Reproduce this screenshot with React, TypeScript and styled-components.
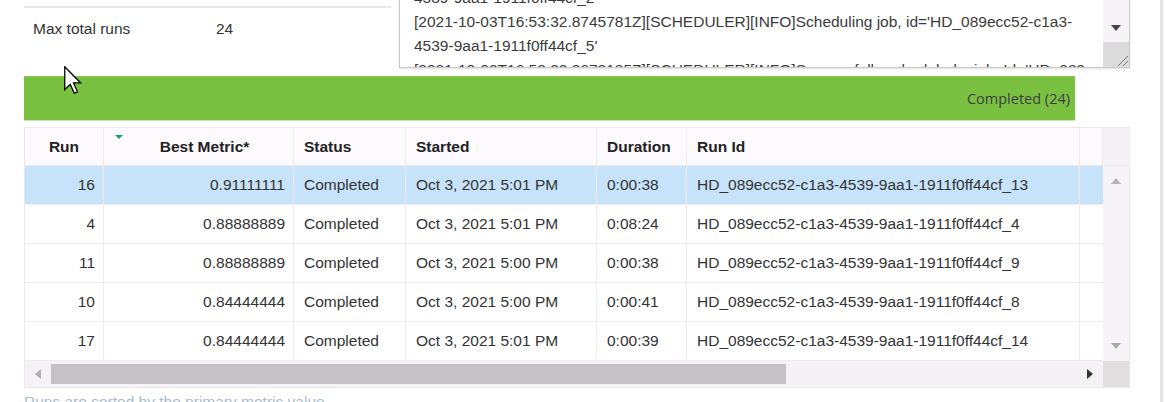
import React from "react";
import styled, { createGlobalStyle } from "styled-components";

const Global = createGlobalStyle`
  html, body { margin: 0; padding: 0; background: #fff; overflow: hidden; }
  body { font-family: "Liberation Sans", Arial, sans-serif; color: #333; }
`;

const Shell = styled.div`
  position: relative;
  display: flex;
  align-items: flex-start;
  width: 1165px;
  height: 402px;
  overflow: hidden;
  background: #fff;
`;

const Main = styled.div`
  width: 1160px;
  flex-shrink: 0;
  box-sizing: border-box;
  padding-left: 24px;
  margin-top: -40px;
  display: flex;
  flex-direction: column;
  & > * {
    flex-shrink: 0;
  }
`;

const Edge = styled.div`
  flex: 1;
  align-self: stretch;
  border-left: 3px solid #e3e3e3;
`;

const TopRow = styled.div`
  display: flex;
  gap: 8px;
  height: 108px;
`;

const Props = styled.div`
  width: 367px;
  display: flex;
  flex-direction: column;
`;

const PropRow = styled.div<{ $divider?: boolean }>`
  display: flex;
  align-items: center;
  flex-shrink: 0;
  height: ${(p) => (p.$divider ? "48px" : "42px")};
  box-sizing: border-box;
  padding-left: 9px;
  font-size: 15.5px;
  color: #333;
  border-bottom: ${(p) => (p.$divider ? "2px solid #e8e8e8" : "none")};
`;

const PropLabel = styled.span`
  width: 183px;
`;

const LogBox = styled.div`
  width: 731px;
  box-sizing: border-box;
  border: 1px solid #c9c9c9;
  box-shadow: 0 1px 2px rgba(0, 0, 0, 0.12);
  display: flex;
  background: #fff;
`;

const LogText = styled.div`
  flex: 1;
  overflow: hidden;
  padding: 1px 0 0 14px;
  font-size: 15.5px;
  line-height: 24px;
  color: #3b3b3b;
  white-space: nowrap;
`;

const LogScroll = styled.div`
  width: 26px;
  background: #f7f4f7;
  display: flex;
  flex-direction: column;
  justify-content: flex-end;
`;

const ArrowCell = styled.div<{ $h: number }>`
  height: ${(p) => p.$h}px;
  display: flex;
  align-items: center;
  justify-content: center;
`;

const Grip = styled.div`
  height: 25px;
  background: #dcdcdc;
  display: flex;
  align-items: flex-end;
  justify-content: flex-end;
`;

const Tri = styled.span<{ $dir: "up" | "down" | "left" | "right"; $c: string }>`
  width: 0;
  height: 0;
  border-style: solid;
  ${(p) =>
    p.$dir === "down"
      ? `border-width: 6px 5px 0 5px; border-color: ${p.$c} transparent transparent transparent;`
      : p.$dir === "up"
      ? `border-width: 0 5px 6px 5px; border-color: transparent transparent ${p.$c} transparent;`
      : p.$dir === "left"
      ? `border-width: 5px 6px 5px 0; border-color: transparent ${p.$c} transparent transparent;`
      : `border-width: 5px 0 5px 6px; border-color: transparent transparent transparent ${p.$c};`}
`;

const StatusBar = styled.div`
  margin-top: 8px;
  width: 1051px;
  height: 45px;
  box-sizing: border-box;
  background: #7ac142;
  border-top: 1px solid #86c755;
  border-bottom: 1px solid #c6e5a8;
  display: flex;
  align-items: center;
  justify-content: flex-end;
  padding-right: 5px;
  font-family: "Open Sans", "DejaVu Sans", sans-serif;
  font-size: 14.5px;
  color: #3e3e3e;
`;

const Frame = styled.div`
  margin-top: 6px;
  width: 1106px;
  box-sizing: border-box;
  border: 1px solid #ebe7eb;
  display: flex;
  flex-direction: column;
`;

const COLS = "79px 190px 112px 191px 90px 393px 23px";

const HeadRow = styled.div`
  display: grid;
  grid-template-columns: ${COLS} 26px;
  height: 38px;
  box-sizing: border-box;
  border-bottom: 1px solid #ebe7eb;
  background: #fdfafd;
`;

const HeadCell = styled.div<{ $center?: boolean; $scroll?: boolean; $sorted?: boolean }>`
  position: relative;
  display: flex;
  align-items: center;
  justify-content: ${(p) => (p.$center ? "center" : "flex-start")};
  padding: ${(p) => (p.$sorted ? "0 10px 0 22px" : "0 10px")};
  box-sizing: border-box;
  border-right: ${(p) => (p.$scroll ? "none" : "1px solid #efebef")};
  background: ${(p) => (p.$scroll ? "#f5f2f5" : "transparent")};
  font-weight: bold;
  font-size: 15.5px;
  color: #222;
`;

const SortMark = styled.span`
  position: absolute;
  left: 11px;
  top: 7px;
  width: 0;
  height: 0;
  border-style: solid;
  border-width: 4px 4px 0 4px;
  border-color: #1c9b6e transparent transparent transparent;
`;

const Body = styled.div`
  display: flex;
`;

const Rows = styled.div`
  width: 1078px;
  display: flex;
  flex-direction: column;
`;

const Row = styled.div<{ $sel?: boolean }>`
  display: grid;
  grid-template-columns: ${COLS};
  height: 39px;
  box-sizing: border-box;
  border-bottom: 1px solid #efebef;
  background: ${(p) => (p.$sel ? "#c6e3fa" : "#fff")};
`;

const Cell = styled.div<{ $right?: boolean; $last?: boolean }>`
  display: flex;
  align-items: center;
  justify-content: ${(p) => (p.$right ? "flex-end" : "flex-start")};
  padding: ${(p) => (p.$right ? "0 8px 0 0" : "0 0 0 10px")};
  box-sizing: border-box;
  border-right: ${(p) => (p.$last ? "none" : "1px solid #efebef")};
  font-size: 15.5px;
  color: #333;
  white-space: nowrap;
  overflow: hidden;
`;

const VScroll = styled.div`
  width: 26px;
  background: #f7f4f7;
  display: flex;
  flex-direction: column;
  justify-content: space-between;
  align-items: center;
  padding: 12px 0;
  box-sizing: border-box;
`;

const HScrollRow = styled.div`
  display: flex;
  height: 26px;
`;

const HTrack = styled.div`
  width: 1078px;
  background: #f5f2f5;
  display: flex;
  align-items: center;
`;

const HBtn = styled.div`
  width: 26px;
  height: 26px;
  display: flex;
  align-items: center;
  justify-content: center;
`;

const HThumb = styled.div`
  width: 735px;
  height: 20px;
  background: #c4c2c4;
`;

const HSpace = styled.div`
  flex: 1;
`;

const Corner = styled.div`
  width: 26px;
  background: #e0dede;
`;

const Footnote = styled.div`
  margin-top: 5px;
  font-size: 15.5px;
  line-height: 18px;
  color: #a9bccd;
  white-space: nowrap;
`;

const Cursor = styled.svg`
  position: absolute;
  left: 64px;
  top: 66px;
`;

type Run = {
  run: number;
  metric: string;
  started: string;
  duration: string;
  id: string;
};

const runs: Run[] = [
  { run: 16, metric: "0.91111111", started: "Oct 3, 2021 5:01 PM", duration: "0:00:38", id: "HD_089ecc52-c1a3-4539-9aa1-1911f0ff44cf_13" },
  { run: 4, metric: "0.88888889", started: "Oct 3, 2021 5:01 PM", duration: "0:08:24", id: "HD_089ecc52-c1a3-4539-9aa1-1911f0ff44cf_4" },
  { run: 11, metric: "0.88888889", started: "Oct 3, 2021 5:00 PM", duration: "0:00:38", id: "HD_089ecc52-c1a3-4539-9aa1-1911f0ff44cf_9" },
  { run: 10, metric: "0.84444444", started: "Oct 3, 2021 5:00 PM", duration: "0:00:41", id: "HD_089ecc52-c1a3-4539-9aa1-1911f0ff44cf_8" },
  { run: 17, metric: "0.84444444", started: "Oct 3, 2021 5:01 PM", duration: "0:00:39", id: "HD_089ecc52-c1a3-4539-9aa1-1911f0ff44cf_14" },
];

const logLines = [
  "[2021-10-03T16:53:32.5104522Z][SCHEDULER][INFO]Successfully scheduled a job. Id='HD_089ecc52-c1a3-",
  "4539-9aa1-1911f0ff44cf_2",
  "[2021-10-03T16:53:32.8745781Z][SCHEDULER][INFO]Scheduling job, id='HD_089ecc52-c1a3-",
  "4539-9aa1-1911f0ff44cf_5'",
  "[2021-10-03T16:53:33.2672185Z][SCHEDULER][INFO]Successfully scheduled a job. Id='HD_089ecc52-c1a3-",
];

export default function App() {
  return (
    <>
      <Global />
      <Shell>
        <Main>
          <TopRow>
            <Props>
              <PropRow $divider>
                <PropLabel>Max concurrent runs</PropLabel>
                <span>4</span>
              </PropRow>
              <PropRow>
                <PropLabel>Max total runs</PropLabel>
                <span>24</span>
              </PropRow>
            </Props>
            <LogBox>
              <LogText>
                {logLines.map((l, i) => (
                  <div key={i}>{l}</div>
                ))}
              </LogText>
              <LogScroll>
                <ArrowCell $h={28}>
                  <Tri $dir="down" $c="#444" />
                </ArrowCell>
                <Grip>
                  <svg width="14" height="14" viewBox="0 0 14 14">
                    <line x1="3" y1="13" x2="13" y2="3" stroke="#777" strokeWidth="1" />
                    <line x1="8" y1="13" x2="13" y2="8" stroke="#777" strokeWidth="1" />
                  </svg>
                </Grip>
              </LogScroll>
            </LogBox>
          </TopRow>

          <StatusBar>Completed (24)</StatusBar>

          <Frame>
            <HeadRow>
              <HeadCell $center>Run</HeadCell>
              <HeadCell $center $sorted>
                <SortMark />
                Best Metric*
              </HeadCell>
              <HeadCell>Status</HeadCell>
              <HeadCell>Started</HeadCell>
              <HeadCell>Duration</HeadCell>
              <HeadCell>Run Id</HeadCell>
              <HeadCell />
              <HeadCell $scroll />
            </HeadRow>
            <Body>
              <Rows>
                {runs.map((r, i) => (
                  <Row key={r.id} $sel={i === 0}>
                    <Cell $right>{r.run}</Cell>
                    <Cell $right>{r.metric}</Cell>
                    <Cell>Completed</Cell>
                    <Cell>{r.started}</Cell>
                    <Cell>{r.duration}</Cell>
                    <Cell>{r.id}</Cell>
                    <Cell $last />
                  </Row>
                ))}
              </Rows>
              <VScroll>
                <Tri $dir="up" $c="#b4b4b4" />
                <Tri $dir="down" $c="#a8a8a8" />
              </VScroll>
            </Body>
            <HScrollRow>
              <HTrack>
                <HBtn>
                  <Tri $dir="left" $c="#b0b0b0" />
                </HBtn>
                <HThumb />
                <HSpace />
                <HBtn>
                  <Tri $dir="right" $c="#333" />
                </HBtn>
              </HTrack>
              <Corner />
            </HScrollRow>
          </Frame>

          <Footnote>Runs are sorted by the primary metric value</Footnote>
        </Main>
        <Edge />
        <Cursor width="18" height="28" viewBox="0 0 12.5 19.5">
          <path
            d="M0.5 0.5 L0.5 16.5 L4.3 12.8 L7.2 19 L9.4 18 L6.6 11.8 L11.6 11.8 Z"
            fill="#fff"
            stroke="#000"
            strokeWidth="0.9"
            strokeLinejoin="miter"
          />
        </Cursor>
      </Shell>
    </>
  );
}
